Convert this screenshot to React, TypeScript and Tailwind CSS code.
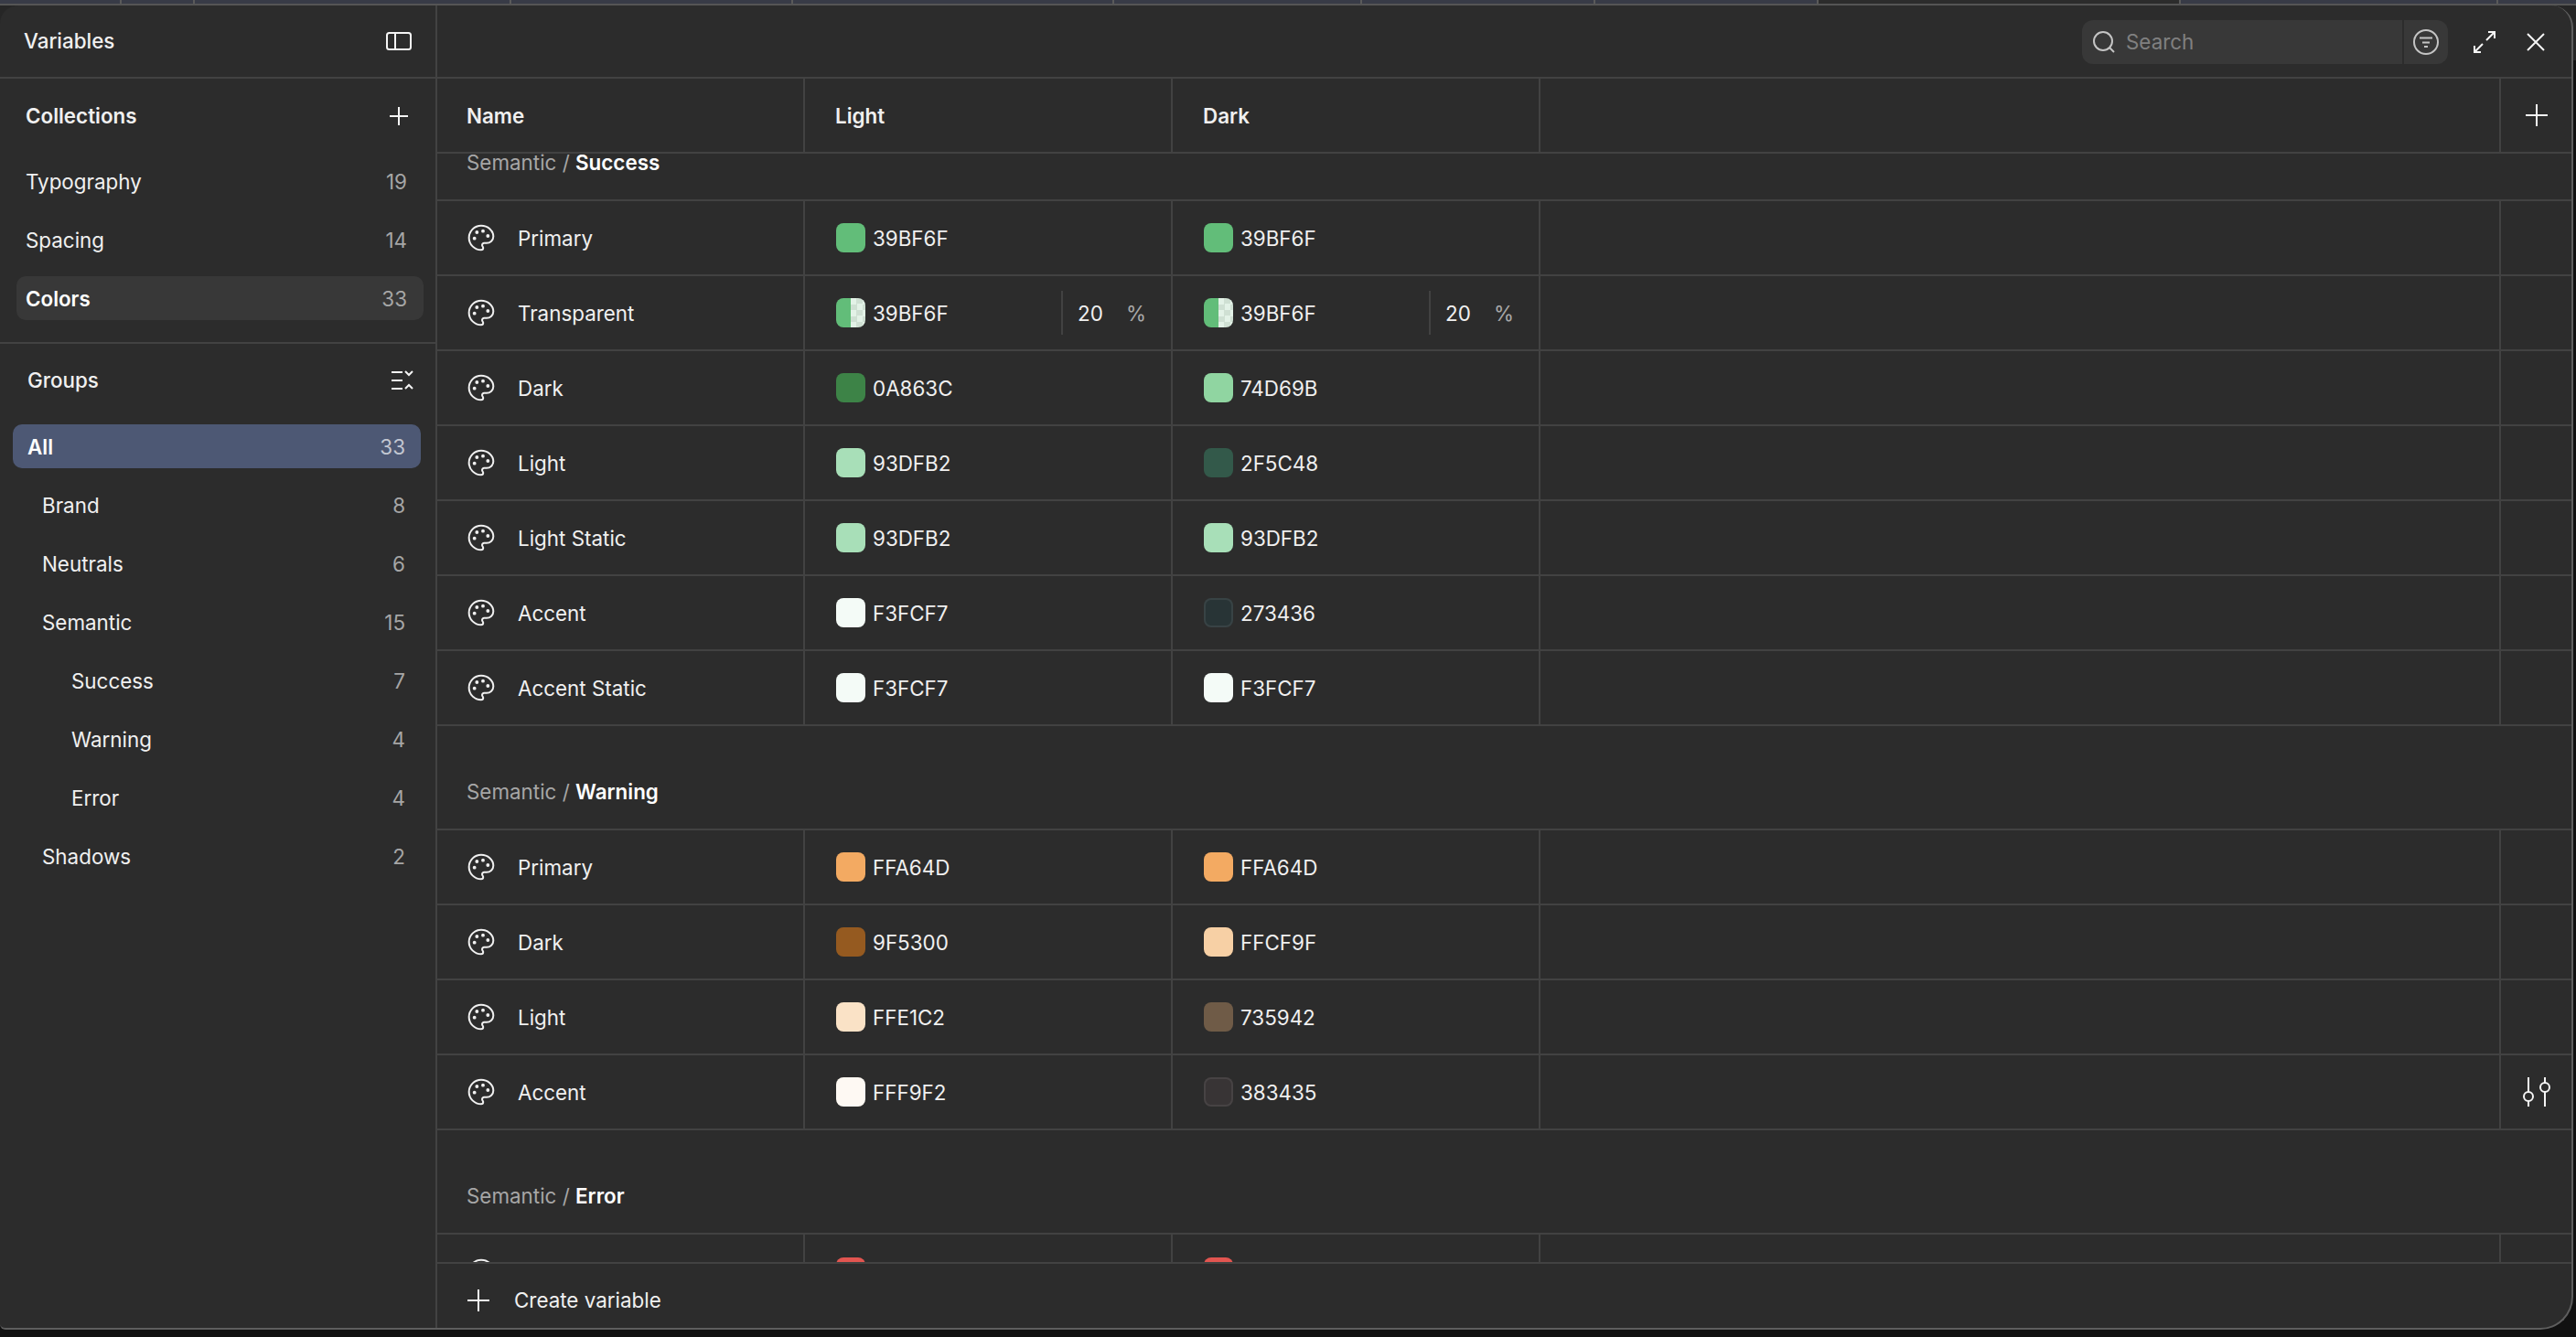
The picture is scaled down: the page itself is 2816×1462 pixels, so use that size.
import React from "react";

const Palette = () => (
  <svg width="32" height="32" viewBox="0 0 24 24" fill="none" stroke="#f0f0f0" strokeWidth="1.5" strokeLinecap="round" strokeLinejoin="round" className="shrink-0">
    <path d="M12 2C6.5 2 2 6.5 2 12s4.5 10 10 10c.926 0 1.648-.746 1.648-1.688 0-.437-.18-.835-.437-1.125-.29-.289-.438-.652-.438-1.125a1.64 1.64 0 0 1 1.668-1.668h1.996c3.051 0 5.555-2.503 5.555-5.554C21.965 6.012 17.461 2 12 2z" />
    <circle cx="13.5" cy="6.5" r="0.7" fill="#f0f0f0" />
    <circle cx="17.5" cy="10.5" r="0.7" fill="#f0f0f0" />
    <circle cx="8.5" cy="7.5" r="0.7" fill="#f0f0f0" />
    <circle cx="6.5" cy="12.5" r="0.7" fill="#f0f0f0" />
  </svg>
);

const Plus = ({ size }: { size: number }) => (
  <svg width={size} height={size} viewBox="0 0 24 24" fill="none" stroke="#f5f5f5" strokeWidth={48 / size} className="shrink-0">
    <path d="M12 0v24M0 12h24" />
  </svg>
);

const Swatch = ({ color, hex, outlined, transparent }: { color: string; hex: string; outlined?: boolean; transparent?: boolean }) => {
  if (transparent) {
    return (
      <div className="flex h-8 w-8 shrink-0 overflow-hidden rounded-lg">
        <div className="h-full w-4" style={{ backgroundColor: color }} />
        <div className="h-full w-4 bg-[image:repeating-conic-gradient(#cfe0d3_0_25%,#e3f2e7_0_50%)] bg-[length:13px_13px]" />
      </div>
    );
  }
  return (
    <div
      title={hex}
      className={outlined ? "h-8 w-8 shrink-0 rounded-lg border-2 border-[#ffffff14]" : "h-8 w-8 shrink-0 rounded-lg"}
      style={{ backgroundColor: color }}
    />
  );
};

type Val = { hex: string; color: string; outlined?: boolean; pct?: boolean };
type Row = { name: string; light: Val; dark: Val; sliders?: boolean };

const v = (hex: string, color: string, outlined?: boolean): Val => ({ hex, color, outlined });

const ValueCell = ({ val }: { val: Val }) => (
  <div className="flex h-full w-[402px] shrink-0 items-center border-r-2 border-[#424242] pl-[34px] pr-[27px]">
    <Swatch color={val.color} hex={val.hex} outlined={val.outlined} transparent={val.pct} />
    <span className="ml-[8px] flex-1 pt-[1px]">{val.hex}</span>
    {val.pct && (
      <div className="flex h-[48px] w-[93px] items-center border-l-2 border-[#424242] pl-[16px] pt-[1px]">
        <span className="flex-1">20</span>
        <span className="text-[#a8a8a8]">%</span>
      </div>
    )}
  </div>
);

const TableRow = ({ row }: { row: Row }) => (
  <div className="flex h-[82px] shrink-0 border-b-2 border-[#424242]">
    <div className="flex h-full w-[402px] shrink-0 items-center border-r-2 border-[#424242] pl-[32px]">
      <Palette />
      <span className="ml-[24px] pt-[1px]">{row.name}</span>
    </div>
    <ValueCell val={row.light} />
    <ValueCell val={row.dark} />
    <div className="h-full flex-1 border-r-2 border-[#424242]" />
    <div className="flex h-full w-[77px] shrink-0 items-center justify-center">
      {row.sliders && (
        <svg width="32" height="32" viewBox="0 0 32 32" fill="none" stroke="#f5f5f5" strokeWidth="2">
          <path d="M7 0v16M7 26v6M25 0v6M25 16v16" />
          <circle cx="7" cy="21" r="5" />
          <circle cx="25" cy="11" r="5" />
        </svg>
      )}
    </div>
  </div>
);

const Heading = ({ name }: { name: string }) => (
  <div className="flex h-[114px] shrink-0 items-end border-b-2 border-[#424242] pb-[24px] pl-[32px] leading-[32px]">
    <span className="text-[#a6a6a6]">Semantic /&nbsp;</span>
    <span className="font-semibold text-white">{name}</span>
  </div>
);

const green = "#62bd79";
const success: Row[] = [
  { name: "Primary", light: v("39BF6F", green), dark: v("39BF6F", green) },
  {
    name: "Transparent",
    light: { hex: "39BF6F", color: green, pct: true },
    dark: { hex: "39BF6F", color: green, pct: true },
  },
  { name: "Dark", light: v("0A863C", "#3d8347"), dark: v("74D69B", "#90d5a1") },
  { name: "Light", light: v("93DFB2", "#a8dfb8"), dark: v("2F5C48", "#33594a") },
  { name: "Light Static", light: v("93DFB2", "#a8dfb8"), dark: v("93DFB2", "#a8dfb8") },
  { name: "Accent", light: v("F3FCF7", "#f4fbf7"), dark: v("273436", "#283436", true) },
  { name: "Accent Static", light: v("F3FCF7", "#f4fbf7"), dark: v("F3FCF7", "#f4fbf7") },
];
const warning: Row[] = [
  { name: "Primary", light: v("FFA64D", "#f3aa62"), dark: v("FFA64D", "#f3aa62") },
  { name: "Dark", light: v("9F5300", "#955a20"), dark: v("FFCF9F", "#f7d0a5") },
  { name: "Light", light: v("FFE1C2", "#fae2c6"), dark: v("735942", "#6f5b47") },
  { name: "Accent", light: v("FFF9F2", "#fef9f3"), dark: v("383435", "#383435", true), sliders: true },
];

const SideRow = ({ label, count, inset, active, selected }: { label: string; count: number; inset: string; active?: boolean; selected?: boolean }) => (
  <div
    className={
      active
        ? "flex h-[48px] items-center rounded-[10px] bg-[#4d5874] pt-[1px] font-semibold text-white " + inset
        : selected
          ? "flex h-[48px] items-center rounded-[10px] bg-[#383838] pt-[1px] font-semibold text-white " + inset
          : "flex h-[48px] items-center rounded-[10px] pt-[1px] " + inset
    }
  >
    <span className="flex-1">{label}</span>
    <span className={active ? "font-normal text-[#c2c6d1]" : "font-normal text-[#a6a6a6]"}>{count}</span>
  </div>
);

const stripCells = [
  { w: "w-[133px]", bg: "bg-[#383b47]" },
  { w: "w-[80px]", bg: "bg-[#383b47]" },
  { w: "w-[346px]", bg: "bg-[#383b47]" },
  { w: "w-[308px]", bg: "bg-[#383b47]" },
  { w: "w-[351px]", bg: "bg-[#383b47]" },
  { w: "w-[271px]", bg: "bg-[#383b47]" },
  { w: "w-[255px]", bg: "bg-[#383b47]" },
  { w: "w-[244px]", bg: "bg-[#383b47]" },
  { w: "w-[396px]", bg: "bg-[#2c2c2c]" },
  { w: "w-[347px]", bg: "bg-[#383b47]" },
];

export default function App() {
  return (
    <div className="flex h-[1462px] w-[2816px] flex-col overflow-hidden bg-[#111111] font-[family-name:Inter,sans-serif] text-[22.4px] leading-[32px] text-[#f0f0f0]">
      {/* strip of the canvas behind the panel */}
      <div className="flex h-[6px] shrink-0 border-b-2 border-[#555555] bg-[#383b47]">
        {stripCells.map((c, i) => (
          <div key={i} className={"h-full shrink-0 border-r-2 border-[#5a5a5a] " + c.w + " " + c.bg} />
        ))}
      </div>

      <div className="flex-1 bg-[linear-gradient(#262626_0,#262626_60px,#111111_60px)]">
        <div className="flex h-[1448px] w-[2813px] overflow-hidden rounded-tl-[20px] rounded-tr-[24px] rounded-br-[36px] rounded-bl-[6px] border-r-2 border-b-2 border-[#5e5e5e] bg-[#2c2c2c]">
          {/* sidebar */}
          <aside className="flex w-[478px] shrink-0 flex-col border-r-2 border-[#424242]">
            <div className="flex h-[80px] shrink-0 items-center justify-between border-b-2 border-[#424242] pl-[26px] pr-[26px] font-medium">
              <span>Variables</span>
              <svg width="28" height="20" viewBox="0 0 28 20" fill="none" stroke="#f5f5f5" strokeWidth="2">
                <rect x="1" y="1" width="26" height="18" rx="2.5" />
                <path d="M10 1v18" />
              </svg>
            </div>

            <div className="flex shrink-0 flex-col border-b-2 border-[#424242] pb-[24px]">
              <div className="flex h-[82px] items-center justify-between pl-[28px] pr-[30px] font-semibold">
                <span>Collections</span>
                <Plus size={20} />
              </div>
              <div className="mt-[6px] flex flex-col gap-[16px] pl-[18px] pr-[13px]">
                <SideRow label="Typography" count={19} inset="pl-[10px] pr-[18px]" />
                <SideRow label="Spacing" count={14} inset="pl-[10px] pr-[18px]" />
                <SideRow label="Colors" count={33} inset="pl-[10px] pr-[18px]" selected />
              </div>
            </div>

            <div className="flex flex-col">
              <div className="flex h-[80px] items-center justify-between pl-[30px] pr-[24px] font-medium">
                <span>Groups</span>
                <svg width="24" height="22" viewBox="0 0 24 22" fill="none" stroke="#f5f5f5" strokeWidth="2">
                  <path d="M0 2h12M0 11h12M0 20h12" />
                  <path d="M15 1l4 4 4-4M15 20l4-4 4 4" />
                </svg>
              </div>
              <div className="mt-[8px] flex flex-col gap-[16px] pl-[14px] pr-[16px]">
                <SideRow label="All" count={33} inset="pl-[16px] pr-[17px]" active />
                <SideRow label="Brand" count={8} inset="pl-[32px] pr-[17px]" />
                <SideRow label="Neutrals" count={6} inset="pl-[32px] pr-[17px]" />
                <SideRow label="Semantic" count={15} inset="pl-[32px] pr-[17px]" />
                <SideRow label="Success" count={7} inset="pl-[64px] pr-[17px]" />
                <SideRow label="Warning" count={4} inset="pl-[64px] pr-[17px]" />
                <SideRow label="Error" count={4} inset="pl-[64px] pr-[17px]" />
                <SideRow label="Shadows" count={2} inset="pl-[32px] pr-[17px]" />
              </div>
            </div>
          </aside>

          {/* main */}
          <main className="flex min-w-0 flex-1 flex-col">
            <div className="flex h-[80px] shrink-0 items-center justify-end border-b-2 border-[#424242] pt-[2px] pr-[29px]">
              <div className="flex h-[48px] w-[400px] items-center overflow-hidden rounded-[12px] bg-[#383838]">
                <div className="flex flex-1 items-center pl-[12px]">
                  <svg width="24" height="24" viewBox="0 0 24 24" fill="none" stroke="#c4c4c4" strokeWidth="2">
                    <circle cx="11" cy="11" r="10" />
                    <path d="M18 18l5 5" />
                  </svg>
                  <span className="ml-[12px] text-[#808080]">Search</span>
                </div>
                <div className="flex h-full w-[50px] items-center justify-center border-l-2 border-[#2c2c2c]">
                  <svg width="28" height="28" viewBox="0 0 28 28" fill="none" stroke="#c4c4c4" strokeWidth="2">
                    <circle cx="14" cy="14" r="13" />
                    <path d="M7 9.5h14M10 14.5h8M12 19h4" />
                  </svg>
                </div>
              </div>
              <svg className="ml-[28px]" width="24" height="24" viewBox="0 0 24 24" fill="none" stroke="#f5f5f5" strokeWidth="2">
                <path d="M14 10l9-9M16 1h7v7M10 14l-9 9M1 16v7h7" />
              </svg>
              <svg className="ml-[34px]" width="20" height="20" viewBox="0 0 20 20" fill="none" stroke="#f5f5f5" strokeWidth="2">
                <path d="M1 1l18 18M19 1L1 19" />
              </svg>
            </div>

            <div className="flex h-[82px] shrink-0 border-b-2 border-[#424242] font-semibold">
              <div className="flex w-[402px] shrink-0 items-center border-r-2 border-[#424242] pl-[32px] pt-[1px]">Name</div>
              <div className="flex w-[402px] shrink-0 items-center border-r-2 border-[#424242] pl-[33px] pt-[1px]">Light</div>
              <div className="flex w-[402px] shrink-0 items-center border-r-2 border-[#424242] pl-[33px] pt-[1px]">Dark</div>
              <div className="flex-1 border-r-2 border-[#424242]" />
              <div className="flex w-[77px] shrink-0 items-center justify-center">
                <Plus size={24} />
              </div>
            </div>

            <div className="min-h-0 flex-1 overflow-hidden">
              <div className="-mt-[62px] flex flex-col">
                <Heading name="Success" />
                {success.map((r) => (
                  <TableRow key={r.name} row={r} />
                ))}
                <Heading name="Warning" />
                {warning.map((r) => (
                  <TableRow key={r.name} row={r} />
                ))}
                <Heading name="Error" />
                <div className="flex h-[82px] shrink-0">
                  <div className="flex h-full w-[402px] shrink-0 items-center border-r-2 border-[#424242] pl-[32px]">
                    <Palette />
                  </div>
                  <div className="flex h-full w-[402px] shrink-0 items-center border-r-2 border-[#424242] pl-[34px]">
                    <div className="h-8 w-8 rounded-lg bg-[#e25550]" />
                  </div>
                  <div className="flex h-full w-[402px] shrink-0 items-center border-r-2 border-[#424242] pl-[34px]">
                    <div className="h-8 w-8 rounded-lg bg-[#e25550]" />
                  </div>
                  <div className="h-full flex-1 border-r-2 border-[#424242]" />
                  <div className="w-[77px] shrink-0" />
                </div>
              </div>
            </div>

            <div className="flex h-[72px] shrink-0 items-center border-t-2 border-[#424242] pl-[33px] pt-[10px]">
              <Plus size={24} />
              <span className="ml-[27px]">Create variable</span>
            </div>
          </main>
        </div>
      </div>
    </div>
  );
}
